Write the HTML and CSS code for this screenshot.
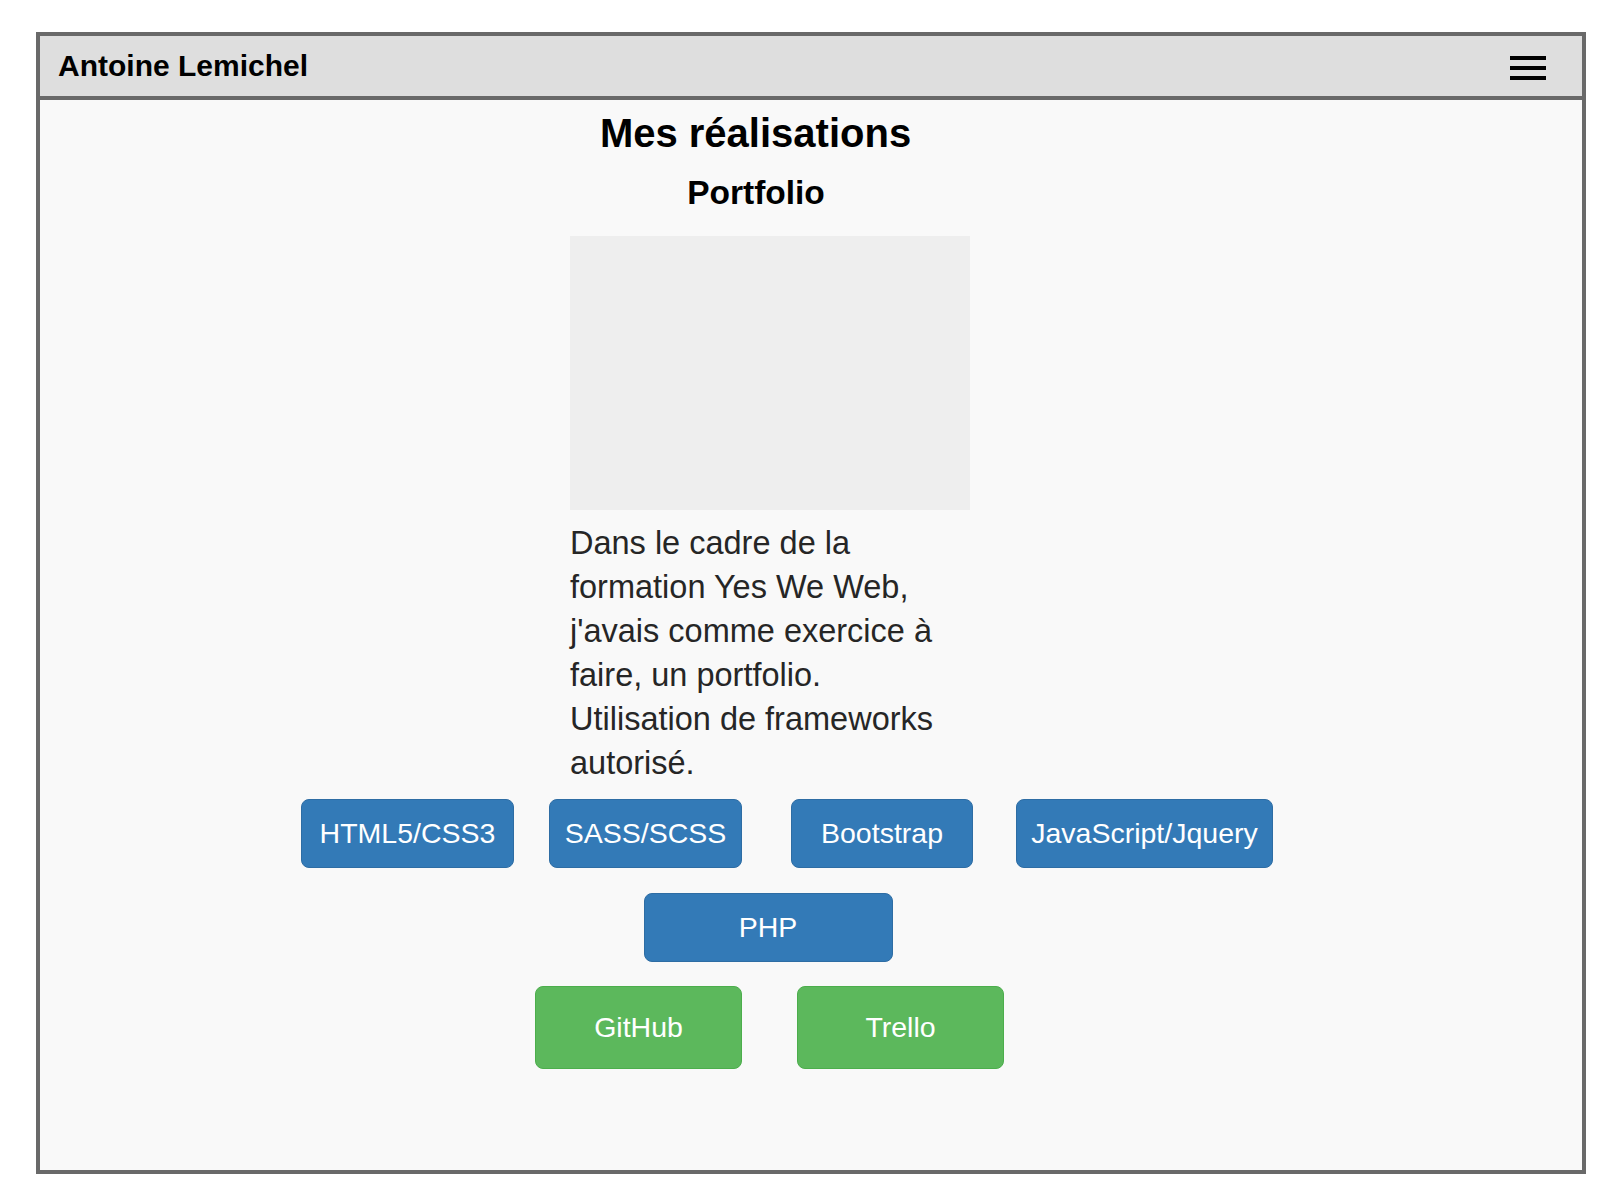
FILE: index.html
```html
<!DOCTYPE html>
<html lang="fr">
<head>
<meta charset="utf-8">
<title>Antoine Lemichel - Mes réalisations</title>
<link rel="stylesheet" href="styles.css">
</head>
<body>
<div class="page">
  <div class="frame">
    <header class="topbar">
      <span class="brand">Antoine Lemichel</span>
      <button class="burger" aria-label="Menu">
        <span class="burger-bar"></span>
        <span class="burger-bar"></span>
        <span class="burger-bar"></span>
      </button>
    </header>
    <main class="content">
      <h1 class="title">Mes réalisations</h1>
      <h2 class="subtitle">Portfolio</h2>
      <div class="thumb"></div>
      <p class="desc">Dans le cadre de la formation Yes We Web, j'avais comme exercice à faire, un portfolio.<br>Utilisation de frameworks autorisé.</p>
      <div class="row row-tech">
        <a class="btn btn-blue w-html">HTML5/CSS3</a>
        <a class="btn btn-blue w-sass">SASS/SCSS</a>
        <a class="btn btn-blue w-boot">Bootstrap</a>
        <a class="btn btn-blue w-js">JavaScript/Jquery</a>
      </div>
      <div class="row row-php">
        <a class="btn btn-blue w-php">PHP</a>
      </div>
      <div class="row row-links">
        <a class="btn btn-green w-link">GitHub</a>
        <a class="btn btn-green w-link">Trello</a>
      </div>
    </main>
  </div>
</div>
</body>
</html>
```

FILE: styles.css
```css
* { box-sizing: border-box; }

html, body {
  margin: 0;
  padding: 0;
  background: #ffffff;
  font-family: "Liberation Sans", Arial, Helvetica, sans-serif;
}

.page {
  padding: 32px 0 0 36px;
}

.frame {
  width: 1550px;
  height: 1142px;
  border: 4px solid #696969;
  background: #f9f9f9;
  display: flex;
  flex-direction: column;
}

.topbar {
  height: 64px;
  background: #dedede;
  border-bottom: 4px solid #696969;
  display: flex;
  align-items: center;
  justify-content: space-between;
  padding: 0 36px 0 18px;
}

.brand {
  font-size: 30px;
  font-weight: bold;
  color: #000;
}

.burger {
  width: 36px;
  height: 24px;
  margin-top: 4px;
  padding: 0;
  border: 0;
  background: transparent;
  display: flex;
  flex-direction: column;
  justify-content: space-between;
}

.burger-bar {
  display: block;
  width: 36px;
  height: 4px;
  background: #000;
}

.content {
  flex: 1;
  display: flex;
  flex-direction: column;
}

.title {
  margin: 9px 0 0;
  padding-right: 111px;
  text-align: center;
  font-size: 40px;
  line-height: 48px;
  font-weight: bold;
  color: #000;
}

.subtitle {
  margin: 17px 0 0;
  padding-right: 110px;
  text-align: center;
  font-size: 33.5px;
  line-height: 38px;
  font-weight: bold;
  color: #000;
}

.thumb {
  margin: 24px 0 0 530px;
  width: 400px;
  height: 274px;
  background: #eeeeee;
}

.desc {
  margin: 11px 0 0 530px;
  width: 400px;
  font-size: 32.5px;
  line-height: 44px;
  color: #262626;
}

.row {
  display: flex;
  justify-content: center;
}

.row-tech {
  margin-top: 14px;
  padding-right: 48px;
}

.row-php {
  margin-top: 25px;
  padding-right: 86px;
}

.row-links {
  margin-top: 24px;
  padding-right: 83px;
  gap: 55px;
}

.btn {
  display: flex;
  align-items: center;
  justify-content: center;
  height: 69px;
  border-radius: 8px;
  border: 1px solid transparent;
  color: #ffffff;
  font-size: 28.5px;
  white-space: nowrap;
  text-decoration: none;
}

.btn-blue {
  background: #337ab7;
  border-color: #2e6da4;
}

.btn-green {
  background: #5cb85c;
  border-color: #4cae4c;
  height: 83px;
}

.w-html { width: 213px; }
.w-sass { width: 193px; margin-left: 35px; }
.w-boot { width: 182px; margin-left: 49px; }
.w-js { width: 257px; margin-left: 43px; }
.w-php { width: 249px; }
.w-link { width: 207px; }
```
